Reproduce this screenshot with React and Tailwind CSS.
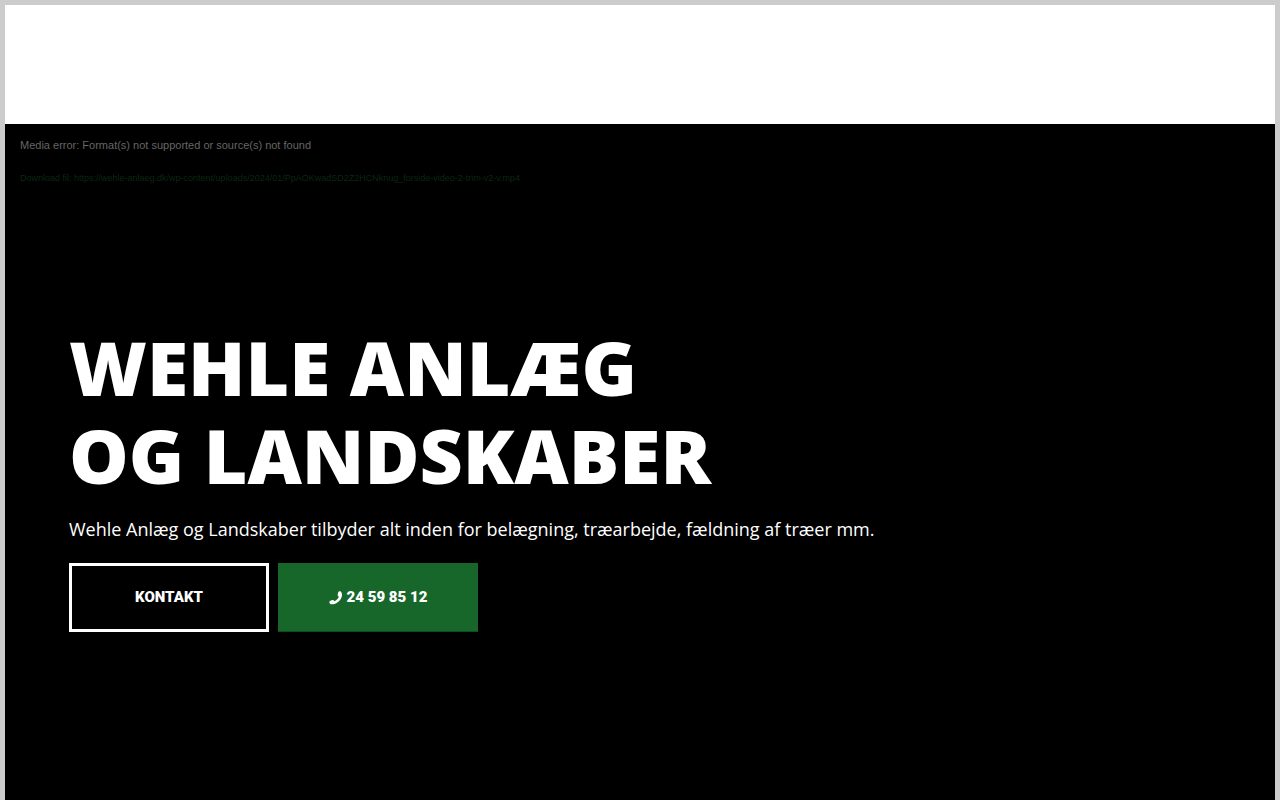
const videoUrl =
    'https://wehle-anlaeg.dk/wp-content/uploads/2024/01/PpAOKwadSD2Z2HCNknug_forside-video-2-trim-v2-v.mp4';

function PhoneIcon() {
    return (
        <svg viewBox="0 0 14 14" className="w-3.5 h-3.5" fill="currentColor" aria-hidden="true">
            <path d="M9.3.9c.6-.7 1.800-.9 2.600-.1 1.500 1.500 1.500 4.500 0 6.900C10 10.800 6.300 13.300 3 13.300c-1.300 0-2.200-.5-2.500-1.500-.3-.9.100-1.700.9-2.100l1.900-.7c.7-.2 1.300 0 1.700.6l.3.6c2-.8 3.700-2.500 4.500-4.500l-.4-.4c-.6-.5-.9-1.200-.7-1.900z" />
        </svg>
    );
}

function VideoError() {
    return (
        <div className="px-[15px] pt-3 font-['Liberation_Sans',Arial,sans-serif]">
            <p className="text-[11px] leading-[18px] text-[#666]">
                Media error: Format(s) not supported or source(s) not found
            </p>
            <a href={videoUrl} className="block mt-4 text-[9px] leading-4 text-[#09280f]">
                Download fil: {videoUrl}
            </a>
        </div>
    );
}

export default function App() {
    return (
        <div className="min-h-screen flex flex-col bg-white border-[5px] border-b-0 border-[#ccc]">
            <header className="h-[119px]"></header>

            {/* Hero */}
            <main className="grow bg-black text-white">
                <VideoError />

                <section className="px-16 pt-[137px] pb-16">
                    <h1 className="font-['Open_Sans',sans-serif] font-extrabold text-[75px] leading-[88px] uppercase">
                        Wehle Anlæg
                        <br />
                        og Landskaber
                    </h1>
                    <p className="mt-4 font-['Open_Sans',sans-serif] text-lg leading-7">
                        Wehle Anlæg og Landskaber tilbyder alt inden for belægning, træarbejde, fældning af træer mm.
                    </p>

                    <div className="mt-5 flex flex-wrap gap-[9px] font-['Roboto',sans-serif] text-[15px] font-black">
                        <a href="#kontakt" className="w-[200px] h-[69px] flex items-center justify-center border-[3px] border-white">
                            KONTAKT
                        </a>
                        <a href="tel:24598512" className="w-[200px] h-[69px] flex items-center justify-center gap-1 bg-[#18672a] shadow-[inset_0_-1px_0_#0c4f1b]">
                            <PhoneIcon />
                            24 59 85 12
                        </a>
                    </div>
                </section>
            </main>
        </div>
    );
}
